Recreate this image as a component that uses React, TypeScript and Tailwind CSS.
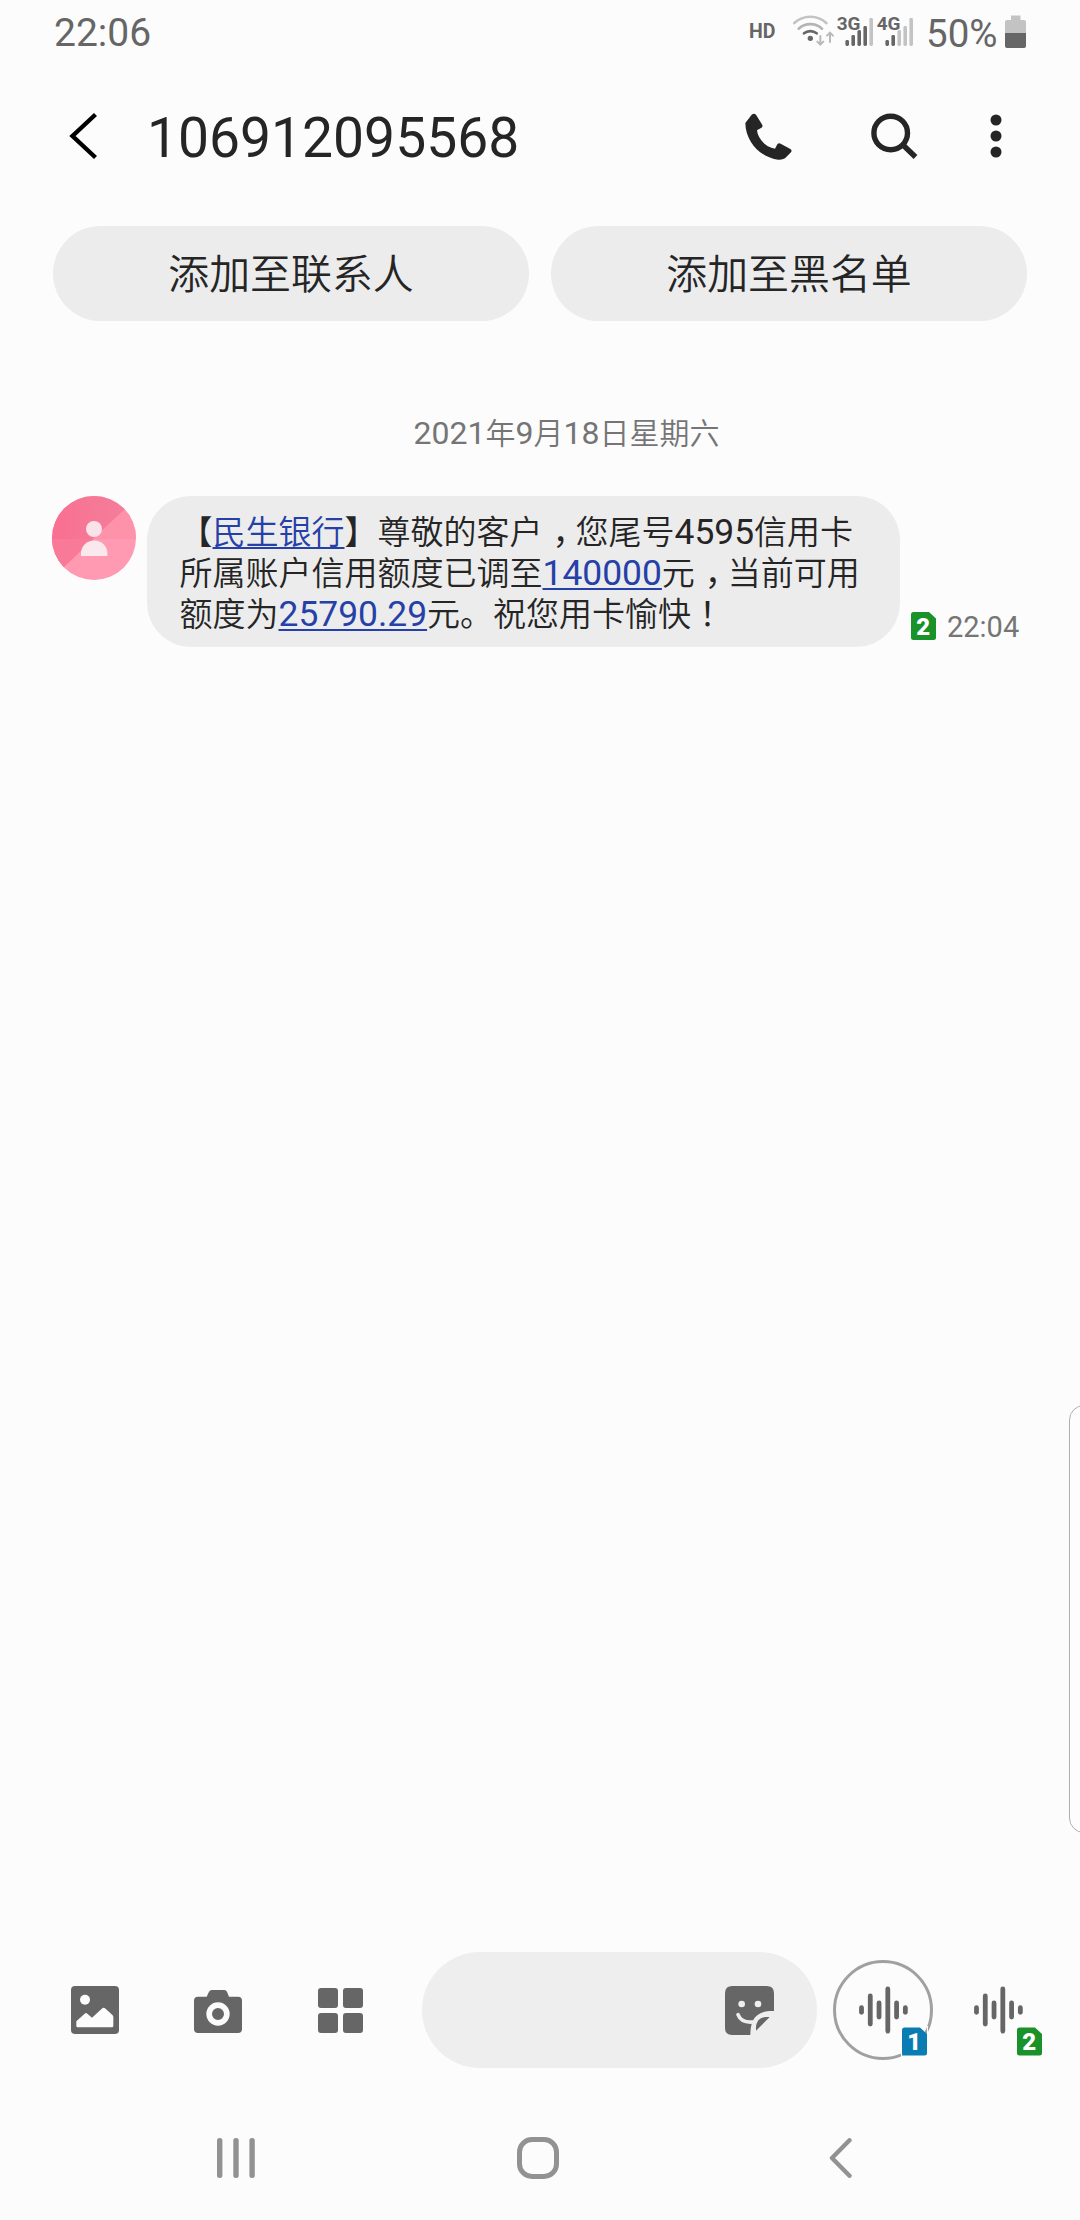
import React from "react";

const CJK = "font-['Roboto','Noto_Sans_CJK_SC',sans-serif]";

function WifiIcon() {
  return (
    <svg className="ml-[18px] mt-[13px] h-[34px] w-[42px]" viewBox="276 39 126 102" fill="none" strokeLinecap="round">
      <path d="M280 69a71 71 0 0 1 96 0" stroke="#c3c3c3" strokeWidth="8" />
      <path d="M293 86a52 52 0 0 1 70 0" stroke="#b4b4b4" strokeWidth="8" />
      <path d="M309 100a30 30 0 0 1 38 0" stroke="#666" strokeWidth="8" />
      <circle cx="328" cy="115" r="8" fill="#666" />
      <path d="M358 108v25M349 125l9 9l9 -9M387 126V98M378 107l9 -9l9 9" stroke="#b9b9b9" strokeWidth="6" />
    </svg>
  );
}

function Signal({ label, strong, className }: { label: string; strong: number; className: string }) {
  const tops = [40, 35, 30, 26, 18];
  return (
    <svg className={className} viewBox="0 13 38 34">
      {tops.map((top, i) => (
        <rect key={top} x={8.4 + i * 6} y={top} width="3.6" height={46 - top} rx="1.4" fill={i < strong ? "#666" : "#c3c3c3"} />
      ))}
      <text
        x="-0.3"
        y="30"
        className="font-['Roboto'] text-[19px] font-bold"
        fill="#666"
        stroke="#fcfcfc"
        strokeWidth="2"
        paintOrder="stroke"
      >
        {label}
      </text>
    </svg>
  );
}

function StatusBar() {
  return (
    <div className="flex h-[66px] items-start text-[#666]">
      <span className="ml-[54px] w-[120px] text-[39px] leading-[67px]">22:06</span>
      <span className="ml-[575px] w-[26px] text-[19.5px] font-bold leading-[63px]">HD</span>
      <WifiIcon />
      <Signal label="3G" strong={4} className="ml-[2px] mt-[13px] h-[34px] w-[38px]" />
      <Signal label="4G" strong={2} className="ml-[2px] mt-[13px] h-[34px] w-[38px]" />
      <span className="ml-[11px] w-[74px] text-[38.5px] leading-[67px]">50%</span>
      <svg className="ml-[5px] mt-[15px] h-[33px] w-[21px]" viewBox="0 0 21 33">
        <path d="M6 0.5h9.5v4.5h3.5a2 2 0 0 1 2 2V19H0V7a2 2 0 0 1 2-2h4z" fill="#c3c3c3" />
        <path d="M0 18h21v13a2 2 0 0 1-2 2H2a2 2 0 0 1-2-2z" fill="#666" />
      </svg>
    </div>
  );
}

function Header() {
  return (
    <header className="flex h-[140px] items-center text-[#252525]">
      <svg className="ml-[69px] h-[48px] w-[29px]" viewBox="0 0 29 48" fill="none">
        <path d="M26.5 2.5L3.5 24L26.5 45.5" stroke="#000" strokeWidth="4.4" />
      </svg>
      <h1 className="ml-[49px] w-[390px] pt-[5px] text-[55.2px] leading-[135px]">106912095568</h1>
      <svg className="ml-[208px] h-[47px] w-[47px]" viewBox="0 0 141 141">
        <path
          d="M1 30L20 5Q27 -1 33 5L52 36Q54 42 48 45L36 52C38 76 62 103 90 107L97 94Q101 89 107 92L136 108Q142 112 138 118L120 136Q112 141 100 140C50 135 2 90 1 30Z"
          fill="#252525"
        />
      </svg>
      <svg className="ml-[79px] h-[47px] w-[47px]" viewBox="0 0 47 47" fill="none" stroke="#252525">
        <circle cx="19.7" cy="20" r="16.8" strokeWidth="5.4" />
        <path d="M31.5 31.5L44.5 44" strokeWidth="5.4" />
      </svg>
      <svg className="ml-[72px] h-[44px] w-[12px]" viewBox="0 0 12 44" fill="#252525">
        <circle cx="6" cy="6" r="5.5" />
        <circle cx="6" cy="22" r="5.5" />
        <circle cx="6" cy="38" r="5.5" />
      </svg>
    </header>
  );
}

function PillButton({ children }: { children: React.ReactNode }) {
  return (
    <button className="h-[95px] w-[476px] rounded-full bg-[#ececec] pt-[4px] text-[40.9px] font-[350] leading-[91px] text-[#252525]">
      {children}
    </button>
  );
}

function SimBadge({ n, color, className }: { n: string; color: string; className: string }) {
  return (
    <svg className={className} viewBox="0 0 25 28">
      <path d="M2.5 0H18L25 6.5V25.5A2.5 2.5 0 0 1 22.5 28H2.5A2.5 2.5 0 0 1 0 25.5V2.5A2.5 2.5 0 0 1 2.5 0Z" fill={color} />
      <text x="12.3" y="22.8" textAnchor="middle" fill="#fff" className="font-['Roboto'] text-[24px] font-black">
        {n}
      </text>
    </svg>
  );
}

function Avatar() {
  return (
    <svg className="h-[84px] w-[84px]" viewBox="0 0 84 84">
      <defs>
        <clipPath id="avatar">
          <circle cx="42" cy="42" r="42" />
        </clipPath>
        <linearGradient id="shade" x1="0" y1="0" x2="1" y2="0">
          <stop offset="0" stopColor="#fa6f91" />
          <stop offset="1" stopColor="#f2809c" />
        </linearGradient>
      </defs>
      <g clipPath="url(#avatar)">
        <rect width="84" height="84" fill="#ff9ab2" />
        <path d="M0 0H84V3L0 82Z" fill="url(#shade)" />
        <path d="M40.5 43L84 3V43Z" fill="#ff92ab" />
        <path d="M0 43H41.5L0 82Z" fill="#f97a98" />
      </g>
      <circle cx="42" cy="33" r="8" fill="#f9e3e8" />
      <path d="M29 60v-3a13.2 12.5 0 0 1 26.4 0v3z" fill="#f9e9ed" />
    </svg>
  );
}

function Zh({ children }: { children: React.ReactNode }) {
  return <span className="text-[33px] font-[350] leading-none">{children}</span>;
}

function Comma() {
  return (
    <span className="ml-[10px] mr-[6.5px] inline-block w-[16.5px] text-[33px] leading-none [font-feature-settings:'halt']">，</span>
  );
}

const LINK = "text-[#2540a8] underline decoration-[2px] underline-offset-[3px]";

function Message() {
  return (
    <div className="mt-[39px] flex items-start">
      <div className="ml-[52px]">
        <Avatar />
      </div>
      <div className="ml-[11px] h-[151px] w-[753px] whitespace-nowrap rounded-[44px] bg-[#ececec] pl-[32.5px] pt-[16px] text-[35.4px] leading-[41px] text-[#252525]">
        <div className="h-[41px]">
          <Zh>【</Zh>
          <a className={"text-[33px] font-[350] leading-none " + LINK}>民生银行</a>
          <Zh>】尊敬的客户</Zh>
          <Comma />
          <Zh>您尾号</Zh>4595<Zh>信用卡</Zh>
        </div>
        <div className="h-[41px]">
          <Zh>所属账户信用额度已调至</Zh>
          <a className={LINK}>140000</a>
          <Zh>元</Zh>
          <Comma />
          <Zh>当前可用</Zh>
        </div>
        <div className="h-[41px]">
          <Zh>额度为</Zh>
          <a className={LINK}>25790.29</a>
          <Zh>元。祝您用卡愉快</Zh>
          <span className="font-['Noto_Sans_CJK_TC'] text-[33px] leading-none">！</span>
        </div>
      </div>
      <SimBadge n="2" color="#189229" className="ml-[11px] mt-[116px] h-[28px] w-[25px]" />
      <span className="ml-[11px] mt-[111px] text-[29px] leading-[40px] text-[#757575]">22:04</span>
    </div>
  );
}

function VoiceWave() {
  const heights = [9.4, 33, 19, 47, 19, 9.4];
  return (
    <svg className="h-[48px] w-[50px]" viewBox="0 0 50 48" fill="#666">
      {heights.map((h, i) => (
        <rect key={i} x={1.1 + i * 8.77} y={24 - h / 2} width="4.8" height={h} rx="2.4" />
      ))}
    </svg>
  );
}

function ComposeBar() {
  return (
    <div className="flex h-[116px] items-center">
      <svg className="ml-[71px] h-[48px] w-[48px]" viewBox="0 0 144 144">
        <rect width="144" height="144" rx="12" fill="#666" />
        <circle cx="42" cy="41" r="15" fill="#fcfcfc" />
        <path d="M16 106L41 83Q45 79 49 83L63 95L94 67Q98 63 102 67L125 88Q127 91 127 94V120Q127 124 123 124H20Q16 124 16 120Z" fill="#fcfcfc" />
      </svg>
      <svg className="ml-[75px] mt-[2px] h-[43px] w-[48px]" viewBox="0 0 144 129">
        <path d="M12 20H38L45 5Q48 0 53 0H91Q97 0 99 5L105 20H132Q144 20 144 32V117Q144 129 132 129H12Q0 129 0 117V32Q0 20 12 20Z" fill="#666" />
        <circle cx="72" cy="72" r="26.5" fill="none" stroke="#fcfcfc" strokeWidth="17" />
      </svg>
      <div className="ml-[76px] grid grid-cols-2 gap-[5px]">
        <i className="h-5 w-5 rounded-[3px] bg-[#666]" />
        <i className="h-5 w-5 rounded-[3px] bg-[#666]" />
        <i className="h-5 w-5 rounded-[3px] bg-[#666]" />
        <i className="h-5 w-5 rounded-[3px] bg-[#666]" />
      </div>
      <div className="ml-[59px] flex h-[116px] w-[395px] items-center justify-end rounded-full bg-[#eee] pr-[43px]">
        <svg className="h-[49px] w-[49px]" viewBox="0 0 147 147">
          <path d="M22 0H125Q147 0 147 22V75C104 74 76 88 76 147H22Q0 147 0 125V22Q0 0 22 0Z" fill="#666" />
          <path d="M93 134V122C95 104 106 93 124 93H134Z" fill="#666" />
          <circle cx="50" cy="54" r="10" fill="#eee" />
          <circle cx="99" cy="54" r="10" fill="#eee" />
          <path d="M39 86C46 104 62 110 84 108" fill="none" stroke="#eee" strokeWidth="11" strokeLinecap="round" />
        </svg>
      </div>
      <div className="relative ml-[16px] flex h-[100px] w-[100px] items-center justify-center rounded-full border-[3px] border-[#a0a0a0]">
        <VoiceWave />
        <SimBadge n="1" color="#0a7cb4" className="absolute left-[66px] top-[64px] h-[29px] w-[25px] outline-[1.5px] outline-[#fcfcfc]" />
      </div>
      <div className="relative ml-[15px] flex h-[100px] w-[100px] items-center justify-center">
        <VoiceWave />
        <SimBadge n="2" color="#189229" className="absolute left-[69px] top-[67px] h-[29px] w-[25px]" />
      </div>
    </div>
  );
}

function NavBar() {
  return (
    <nav className="mt-[69px] flex h-[42px] items-center">
      <svg className="ml-[217px] h-[40px] w-[38px]" viewBox="0 0 38 40" fill="#929292">
        <rect x="0" width="5.4" height="40" rx="2.5" />
        <rect x="16.3" width="5.4" height="40" rx="2.5" />
        <rect x="32.4" width="5.4" height="40" rx="2.5" />
      </svg>
      <div className="ml-[262px] h-[42px] w-[42px] rounded-[15px] border-[5px] border-[#929292]" />
      <svg className="ml-[270px] h-[40px] w-[24px]" viewBox="0 0 24 40" fill="none" stroke="#929292" strokeWidth="4.4" strokeLinecap="round" strokeLinejoin="round">
        <path d="M20.5 2.3L3 20L20.5 37.7" />
      </svg>
    </nav>
  );
}

export default function App() {
  return (
    <div className={"relative flex h-[2220px] w-[1080px] flex-col overflow-hidden bg-[#fcfcfc] " + CJK}>
      <StatusBar />
      <Header />
      <div className="mt-[20px] flex gap-[22px] pl-[53px]">
        <PillButton>添加至联系人</PillButton>
        <PillButton>添加至黑名单</PillButton>
      </div>
      <div className="mt-[88px] h-[48px] whitespace-nowrap pl-[53px] text-center text-[32px] leading-[48px] text-[#757575]">
        2021<span className="text-[30px] font-[350] leading-none">年</span>9
        <span className="text-[30px] font-[350] leading-none">月</span>18
        <span className="text-[30px] font-[350] leading-none">日星期六</span>
      </div>
      <Message />
      <div className="flex-1" />
      <ComposeBar />
      <NavBar />
      <div className="h-[41px]" />
      <div className="absolute -right-[20px] top-[1405px] h-[428px] w-[31px] rounded-[15px] border border-[#b0b0b0] bg-[#fdfdfd]" />
    </div>
  );
}
